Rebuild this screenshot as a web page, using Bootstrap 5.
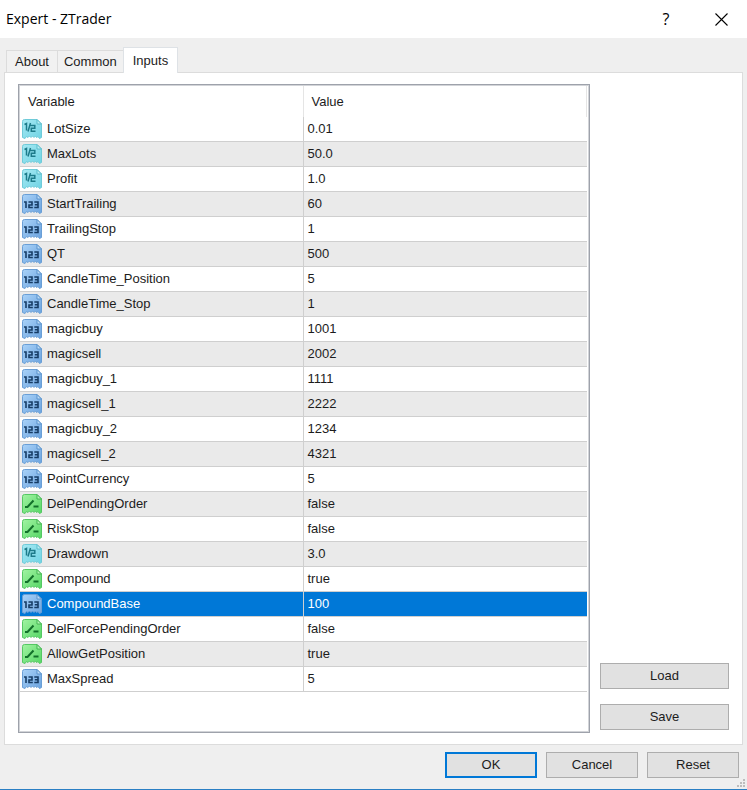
<!DOCTYPE html>
<html lang="en">
<head>
<meta charset="utf-8">
<meta name="viewport" content="width=device-width, initial-scale=1">
<title>Expert - ZTrader</title>
<link href="https://cdn.jsdelivr.net/npm/bootstrap@5.3.0/dist/css/bootstrap.min.css" rel="stylesheet">
<style>
body{background:#efefef;color:#1c1c1c;font-family:"Liberation Sans",Arial,sans-serif;font-size:13px;line-height:20px}
.dialog{border-bottom:1px solid #2a7fc4}
.titlebar{height:38px;padding:0 7px 0 6px;background:#fff;color:#000;font-family:"Open Sans","Noto Sans",sans-serif}
.title-text{font-size:14px;line-height:20px}
.title-btn{width:38px;height:36px;padding:0;border:0;background:transparent;font-size:16px;line-height:20px}
.title-actions{gap:17px}
.work{padding:9px 4px 0}
.dialog-tabs{padding-left:2px;border:0;position:relative;z-index:1}
.dialog-tabs .nav-link{height:22px;margin:0 -1px 0 0;padding:0 6px;border:1px solid #dcdcdc;border-bottom:0;border-radius:0;background:#f1f1f1;color:#1c1c1c;line-height:22px}
.dialog-tabs .nav-link:first-child{padding:0 8px}
.dialog-tabs .nav-link.active{height:26px;margin-bottom:-1px;padding:0 9px;background:#fff;color:#1c1c1c;line-height:22px}
.panel{padding:11px 13px 11px;border:1px solid #dcdcdc;background:#fff;gap:10px}
.list-box{min-width:0;border:1px solid #9ea2ab;outline:1px solid #d2d4d8;outline-offset:-2px;padding:1px 2px 1px 1px}
.inputs-table{width:100%;table-layout:fixed;border-collapse:separate;border-spacing:0}
.inputs-table th{height:31px;padding:0 8px;font-weight:400;border-right:1px solid #e5e5e5}
.inputs-table .col-variable{width:50%}
.inputs-table td{height:25px;padding:0 4px;border-bottom:1px solid #cfcfcf;line-height:24px;white-space:nowrap}
.inputs-table td:first-child{padding:0 2px;border-right:1px solid #cfcfcf}
.inputs-table tbody tr:nth-child(even) td{background:#eaeaea}
.inputs-table tbody tr.selected td{background:#0078d7;color:#fff}
.type-icon{width:20px;height:20px;margin:2px 5px 0 0;vertical-align:top}
.side{width:129px;padding-bottom:3px;gap:15px}
.dlg-btn{height:26px;padding:0;border:1px solid #adadad;border-radius:0;background:#e1e1e1;color:#1c1c1c;font-size:13px;line-height:24px}
.dlg-btn.default{border:2px solid #0078d7;line-height:22px}
.foot{padding:7px 8px 11px;gap:9px}
.foot .dlg-btn{width:92px}
.grip{position:absolute;right:0;bottom:0;width:11px;height:11px}
</style>
<script src="https://cdn.jsdelivr.net/npm/bootstrap@5.3.0/dist/js/bootstrap.bundle.min.js"></script>
</head>
<body>
<svg width="0" height="0" class="position-absolute" aria-hidden="true">
<defs>
<linearGradient id="gc" x1="0" y1="0" x2="1" y2="1"><stop offset="0" stop-color="#a6e9f3"/><stop offset="1" stop-color="#6fd3e4"/></linearGradient>
<linearGradient id="gb" x1="0" y1="0" x2="1" y2="1"><stop offset="0" stop-color="#a9d2f8"/><stop offset="1" stop-color="#6ba3df"/></linearGradient>
<linearGradient id="gg" x1="0" y1="0" x2="1" y2="1"><stop offset="0" stop-color="#a2f3a2"/><stop offset="1" stop-color="#56d766"/></linearGradient>
<path id="sheet" d="M2.500 .5H15L19.500 5V18.500L17.500 19.500 16 17.500 14.500 18.500 13.500 17 12 18.500 10.500 17 9 18.500 7.500 17 6 18.500 4.500 17.500 3 19.500 .5 18.500V2.500Q.5 .5 2.500 .5Z"/>
</defs>
<symbol id="i-double" viewBox="0 0 20 20"><use href="#sheet" fill="url(#gc)" stroke="#6fcbd9"/><path d="M15 .5V5H19.500Z" fill="#b9f0f6" stroke="#5cbccb"/><path d="M2.500 5.500L4.500 4.500V11.500M8.500 4L6 12.500M8.500 6.500H12.800V9.300H9.300V12.300H13.500" fill="none" stroke="#1d7b8a" stroke-width="1.500"/></symbol>
<symbol id="i-int" viewBox="0 0 20 20"><use href="#sheet" fill="url(#gb)" stroke="#6a9fd6"/><path d="M15 .5V5H19.500Z" fill="#bcdcf8" stroke="#5a93cc"/><path d="M2 8H4V14M6.500 8H10V11H7V13.500H10.800M12.300 8H16V13.500H12.300M12.800 10.800H16" fill="none" stroke="#163c66" stroke-width="1.600"/></symbol>
<symbol id="i-bool" viewBox="0 0 20 20"><use href="#sheet" fill="url(#gg)" stroke="#55c863"/><path d="M15 .5V5H19.500Z" fill="#b5f5b5" stroke="#44b553"/><path d="M3 13H5.500L11.500 6.500M11.500 12.500H16.500" fill="none" stroke="#12702a" stroke-width="2"/></symbol>
</svg>
<main class="dialog d-flex flex-column min-vh-100 position-relative">
<header class="titlebar d-flex align-items-center justify-content-between">
<h1 class="title-text fw-normal m-0">Expert - ZTrader</h1>
<div class="title-actions d-flex">
<button type="button" class="title-btn" aria-label="Help">?</button>
<button type="button" class="title-btn" aria-label="Close"><svg width="13" height="13" viewBox="0 0 13 13" class="d-block mx-auto"><path d="M.5 .5L12.500 12.500M12.500 .5L.5 12.500" stroke="#000" stroke-width="1.100"/></svg></button>
</div>
</header>
<div class="work d-flex flex-column flex-grow-1">
<div class="dialog-tabs nav nav-tabs align-items-end" role="tablist">
<button type="button" class="nav-link" role="tab" aria-selected="false">About</button>
<button type="button" class="nav-link" role="tab" aria-selected="false">Common</button>
<button type="button" class="nav-link active" role="tab" aria-selected="true">Inputs</button>
</div>
<section class="panel d-flex flex-grow-1" role="tabpanel" aria-label="Inputs">
<div class="list-box flex-grow-1">
<table class="inputs-table">
<thead><tr><th class="col-variable" scope="col">Variable</th><th scope="col">Value</th></tr></thead>
<tbody>
<tr><td><svg class="type-icon"><use href="#i-double"/></svg>LotSize</td><td>0.01</td></tr>
<tr><td><svg class="type-icon"><use href="#i-double"/></svg>MaxLots</td><td>50.0</td></tr>
<tr><td><svg class="type-icon"><use href="#i-double"/></svg>Profit</td><td>1.0</td></tr>
<tr><td><svg class="type-icon"><use href="#i-int"/></svg>StartTrailing</td><td>60</td></tr>
<tr><td><svg class="type-icon"><use href="#i-int"/></svg>TrailingStop</td><td>1</td></tr>
<tr><td><svg class="type-icon"><use href="#i-int"/></svg>QT</td><td>500</td></tr>
<tr><td><svg class="type-icon"><use href="#i-int"/></svg>CandleTime_Position</td><td>5</td></tr>
<tr><td><svg class="type-icon"><use href="#i-int"/></svg>CandleTime_Stop</td><td>1</td></tr>
<tr><td><svg class="type-icon"><use href="#i-int"/></svg>magicbuy</td><td>1001</td></tr>
<tr><td><svg class="type-icon"><use href="#i-int"/></svg>magicsell</td><td>2002</td></tr>
<tr><td><svg class="type-icon"><use href="#i-int"/></svg>magicbuy_1</td><td>1111</td></tr>
<tr><td><svg class="type-icon"><use href="#i-int"/></svg>magicsell_1</td><td>2222</td></tr>
<tr><td><svg class="type-icon"><use href="#i-int"/></svg>magicbuy_2</td><td>1234</td></tr>
<tr><td><svg class="type-icon"><use href="#i-int"/></svg>magicsell_2</td><td>4321</td></tr>
<tr><td><svg class="type-icon"><use href="#i-int"/></svg>PointCurrency</td><td>5</td></tr>
<tr><td><svg class="type-icon"><use href="#i-bool"/></svg>DelPendingOrder</td><td>false</td></tr>
<tr><td><svg class="type-icon"><use href="#i-bool"/></svg>RiskStop</td><td>false</td></tr>
<tr><td><svg class="type-icon"><use href="#i-double"/></svg>Drawdown</td><td>3.0</td></tr>
<tr><td><svg class="type-icon"><use href="#i-bool"/></svg>Compound</td><td>true</td></tr>
<tr class="selected"><td><svg class="type-icon"><use href="#i-int"/></svg>CompoundBase</td><td>100</td></tr>
<tr><td><svg class="type-icon"><use href="#i-bool"/></svg>DelForcePendingOrder</td><td>false</td></tr>
<tr><td><svg class="type-icon"><use href="#i-bool"/></svg>AllowGetPosition</td><td>true</td></tr>
<tr><td><svg class="type-icon"><use href="#i-int"/></svg>MaxSpread</td><td>5</td></tr>
</tbody>
</table>
</div>
<div class="side d-flex flex-column justify-content-end flex-shrink-0">
<button type="button" class="btn dlg-btn">Load</button>
<button type="button" class="btn dlg-btn">Save</button>
</div>
</section>
</div>
<footer class="foot d-flex justify-content-end">
<button type="button" class="btn dlg-btn default">OK</button>
<button type="button" class="btn dlg-btn">Cancel</button>
<button type="button" class="btn dlg-btn">Reset</button>
</footer>
<svg class="grip" viewBox="0 0 11 11" fill="#bdbdbd" aria-hidden="true"><path d="M7 1h2v2H7zM4 4h2v2H4zM7 4h2v2H7zM1 7h2v2H1zM4 7h2v2H4zM7 7h2v2H7z"/></svg>
</main>
</body>
</html>
